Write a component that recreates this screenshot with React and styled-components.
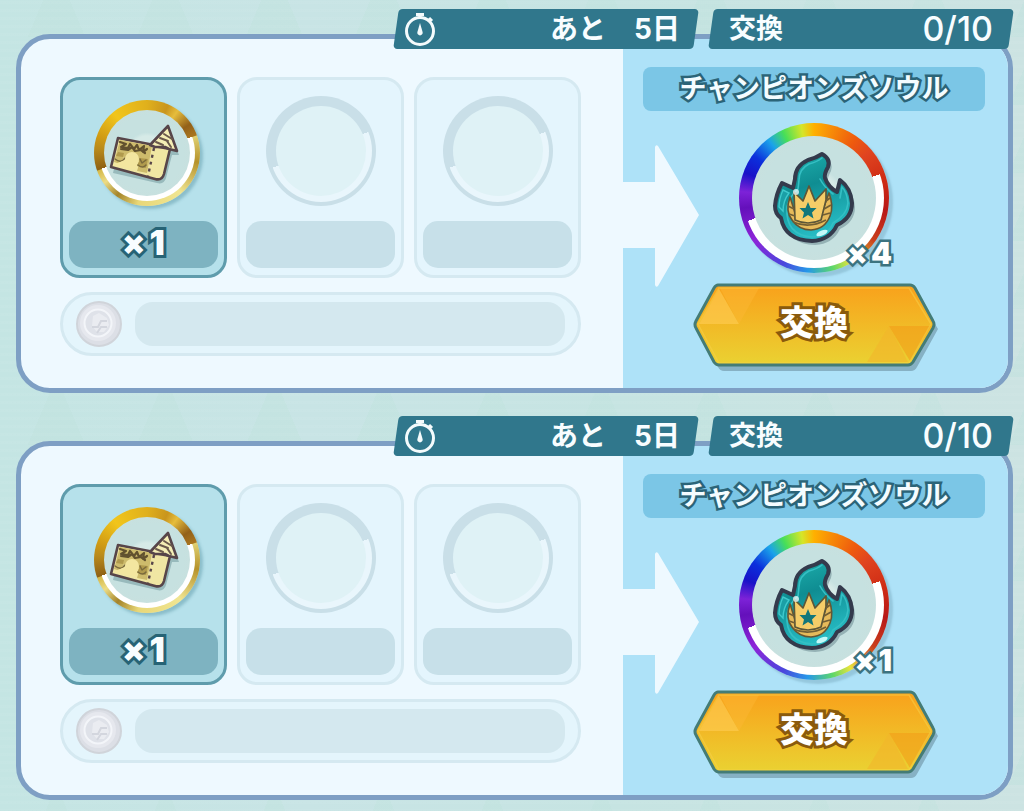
import React, { useId } from 'react'
import styled, { createGlobalStyle } from 'styled-components';

const offers = [
    { id: 1, name: 'チャンピオンズソウル', cost: 1, amount: 4, done: 0, limit: 10, days: 5 },
    { id: 2, name: 'チャンピオンズソウル', cost: 1, amount: 1, done: 0, limit: 10, days: 5 },
]

function Stopwatch() {
    return (
        <svg width="32" height="36" viewBox="0 0 32 36" fill="none" stroke="#f4fbfc" aria-hidden="true">
            <circle cx="16" cy="20" r="13.5" strokeWidth="3" />
            <path d="M12 3.5h8M16 3v5M25 7l3 3" strokeWidth="3" />
            <path d="M16 12l2.6 9a2.7 2.7 0 1 1-5.2 0z" fill="#f4fbfc" stroke="none" />
        </svg>
    )
}

function Ticket() {
    return (
        <svg width="76" height="64" viewBox="0 0 76 64" aria-hidden="true">
            <g strokeLinejoin="round" strokeLinecap="round" stroke="#574549">
                <path d="M9 18L40 24L59 6L68 30L61 30L55 53Q53 60 46 58L2 48Z" fill="#3c6c7455" stroke="none" transform="translate(2 4)" />
                <path d="M9 17L40 23L45 25L61 28L55 53Q53 60 46 58L2 46Z" fill="#f0e6a3" strokeWidth="2.6" />
                <path d="M43 25L11 19L5 41L11 43L15 36L31 40L28 50L38 52Z" fill="#cdbb6c" stroke="none" />
                <path d="M9 31l6 1l-1 4l-7-1zM31 37l8 1l-2 9l-9-2z" fill="#b09a4d" stroke="none" />
                <path d="M11 21l6 2l-5 3l7 1l2-4l4 5l3-4l2 5l5-4l-1 6l4-3M12 28l7 1l4-3l3 4l6-1l4 3" strokeWidth="2.2" fill="none" stroke="#61512f" />
                <path d="M6 38q6 5 10-1M29 44q5 4 8 0M31 38l2 4l4-3" strokeWidth="1.5" fill="none" stroke="#7a6a3c" />
                <path d="M4 44L28 49V40L18 38Z" fill="#f3e6a0" stroke="none" />
                <circle cx="23" cy="38" r="7" fill="#f3e6a0" stroke="none" />
                <path d="M41 24L59 5L68 30L60 28L56 26L46 26Z" fill="#f5eeb5" strokeWidth="2.6" />
                <path d="M51 17l8 3M55 13l8 5M58 20l4 6M47 21l7 3" strokeWidth="2" fill="none" stroke="#6b5a4c" />
                <path d="M45 27l-6 28" strokeWidth="2.4" strokeDasharray="3 4" strokeLinecap="butt" fill="none" />
            </g>
        </svg>
    )
}

function Flame() {
    const fill = useId()

    return (
        <svg width="86" height="98" viewBox="0 0 86 98" aria-hidden="true">
            <defs>
                <linearGradient id={fill} x1="0" y1="0" x2="0.3" y2="1">
                    <stop offset="0" stopColor="#1fb3b0" />
                    <stop offset="0.45" stopColor="#0f8d92" />
                    <stop offset="1" stopColor="#27bcc4" />
                </linearGradient>
            </defs>
            <path d="M51 5Q45 9 37 11Q24 17 24 30L22 39L11 34Q5 45 4 57Q4 65 10 69Q14 91 41 92Q59 91 66 76Q81 69 81 54Q80 39 69 31L66 43Q57 38 54 29Q53 25 57 18Q60 10 51 5Z" fill="#4b6b7566" transform="translate(3 4)" />
            <path d="M51 5Q45 9 37 11Q24 17 24 30L22 39L11 34Q5 45 4 57Q4 65 10 69Q14 91 41 92Q59 91 66 76Q81 69 81 54Q80 39 69 31L66 43Q57 38 54 29Q53 25 57 18Q60 10 51 5Z" fill={`url(#${fill})`} stroke="#343a4c" strokeWidth="4" strokeLinejoin="round" />
            <path d="M51 9Q46 13 38 15Q28 20 28 31L27 40Q18 48 16 58Q14 86 41 88Q57 87 62 74Q76 66 77 54Q76 43 71 38L69 49M49 30Q53 38 62 45" fill="none" stroke="#35bfc4" strokeWidth="1.6" strokeLinecap="round" />
            <path d="M12 41Q8 50 8 58L12 62Q12 52 18 44Z" fill="#1b9fa6" stroke="#3fc9cc" strokeWidth="1.4" />
            <path d="M19 48Q14 62 21 71Q28 81 40 81Q54 80 59 67Q63 57 58 44L50 66Q38 73 25 67Z" fill="#e6ba5a" stroke="#655633" strokeWidth="1.6" strokeLinejoin="round" />
            <path d="M24 71L23 43L32 52L38 37L44 52L55 40L55 51L50 71Q37 77 24 71Z" fill="#f5cd68" stroke="#5d5738" strokeWidth="1.7" strokeLinejoin="round" />
            <path d="M37 53l2.5 6h6l-4.500 4.500l1.500 6l-5.500-3.500l-5.500 3.500l1.500-6l-4.500-4.500h6z" fill="#12777b" />
            <path d="M17 57l6 3M18 65l6 2M22 73Q38 80 55 71M53 60l7-4M52 66l7-2M55 52l4-3" stroke="#725f34" strokeWidth="1.8" fill="none" />
            <circle cx="25" cy="43" r="3" fill="#f5ffff" opacity="0.75" />
            <ellipse cx="51" cy="84" rx="6" ry="2.5" fill="#d5ffff" opacity="0.9" transform="rotate(-24 51 84)" />
        </svg>
    )
}

function Coin() {
    return (
        <svg width="48" height="48" viewBox="0 0 48 48" aria-hidden="true">
            <circle cx="24" cy="24" r="22" fill="#dcdfe6" stroke="#d0d4da" strokeWidth="2" />
            <circle cx="23" cy="23" r="18" fill="#e6e8ee" />
            <circle cx="23" cy="23" r="13.5" fill="#dfe2e9" stroke="#f3f5f9" strokeWidth="2" />
            <path d="M18 16l6-3l8 5l2 7l-5 7h-7l-5-6z" fill="#eaecf1" />
            <path d="M17 27h6l3-6h6M22 33l4-6h6" fill="none" stroke="#d3d6de" strokeWidth="2" />
        </svg>
    )
}

function Exchange({ offer }) {
    const gold = 'gold' + offer.id

    return (
        <Offer>
            <Tags>
                <Tag>
                    <Stopwatch />
                    <span>あと　{offer.days}日</span>
                </Tag>
                <Tag $wide>
                    <span>交換</span>
                    <Tally>{offer.done}/{offer.limit}</Tally>
                </Tag>
            </Tags>
            <Panel>
                <Costs>
                    <Slots>
                        <Slot $active>
                            <GoldRing><Disc><Ticket /></Disc></GoldRing>
                            <Count $active><span>×</span><span>{offer.cost}</span></Count>
                        </Slot>
                        <Slot><EmptyRing><Disc $empty /></EmptyRing><Count /></Slot>
                        <Slot><EmptyRing><Disc $empty /></EmptyRing><Count /></Slot>
                    </Slots>
                    <CoinRow>
                        <Coin />
                        <CoinBar />
                    </CoinRow>
                </Costs>
                <Reward>
                    <Arrow viewBox="0 0 76 142" aria-hidden="true">
                        <path d="M0 37H32V2Q33 -1 35 1L76 70L35 141Q33 143 32 140V103H0Z" fill="#eef9ff" />
                    </Arrow>
                    <RewardBody>
                        <Title>{offer.name}</Title>
                        <RainbowRing>
                            <Disc><Flame /></Disc>
                            <Amount><span>×</span><span>{offer.amount}</span></Amount>
                        </RainbowRing>
                        <TradeButton type="button">
                            <ButtonShape viewBox="-4 0 250 90" preserveAspectRatio="none" aria-hidden="true">
                                <defs>
                                    <linearGradient id={gold} x1="0" y1="0" x2="0" y2="1">
                                        <stop offset="0" stopColor="#f9a11b" />
                                        <stop offset="1" stopColor="#ead232" />
                                    </linearGradient>
                                </defs>
                                <path d="M30 8H222L245 46L224 84Q222 88 218 88H31Q27 88 25 84L8 50Z" fill="#86b1c4" />
                                <path d="M25 2H217Q220 2 222 5L240 38Q242 41 240 45L220 79Q218 82 215 82H26Q23 82 21 79L3 45Q1 42 3 38L21 5Q23 2 25 2Z" fill={`url(#${gold})`} />
                                <path d="M6 41L26 6L46 41Z" fill="#ffcd55" opacity="0.6" />
                                <path d="M27 5H66L46 41Z" fill="#fdb935" opacity="0.45" />
                                <path d="M196 43H238L217 78Z" fill="#f39a18" opacity="0.55" />
                                <path d="M196 43L215 79H174Z" fill="#f1b62b" opacity="0.6" />
                                <path d="M26 5H216L238 41L216 80H26L5 41Z" fill="none" stroke="#f7d24a" strokeWidth="1.5" opacity="0.5" />
                                <path d="M25 2H217Q220 2 222 5L240 38Q242 41 240 45L220 79Q218 82 215 82H26Q23 82 21 79L3 45Q1 42 3 38L21 5Q23 2 25 2Z" fill="none" stroke="#447c76" strokeWidth="3" />
                            </ButtonShape>
                            <span>交換</span>
                        </TradeButton>
                    </RewardBody>
                </Reward>
            </Panel>
        </Offer>
    )
}

export default function App() {
    return (
        <>
            <GlobalStyle />
            <Page>
                {offers.map((val) => <Exchange key={val.id} offer={val} />)}
            </Page>
        </>
    )
}

const GlobalStyle = createGlobalStyle`
    * {
        box-sizing: border-box;
    }
    body {
        margin: 0;
        background: #c6e4e3;
        font-family: Inter, "Noto Sans CJK JP", sans-serif;
        font-weight: 700;
    }
`

const Page = styled.main`
    display: flex;
    flex-direction: column;
    gap: 23px;
    padding: 9px 11px 12px 16px;
    background:
        repeating-linear-gradient(0deg, #ffffff08 0 3px, transparent 3px 8px),
        conic-gradient(from 157deg at 50% 0, #bfe2dc66 46deg, transparent 0) 2px -31px / 109px 68px,
        linear-gradient(90deg, #c4e5e3, #c8e4e5 30%, #c6e4e2 60%, #cce3e2);
`

const Offer = styled.section`
    display: flex;
    flex-direction: column;
`

const Tags = styled.div`
    position: relative;
    z-index: 1;
    display: grid;
    grid-template-columns: 304px 304px;
    justify-content: end;
    gap: 11px;
    margin-bottom: -15px;
`

const Tag = styled.div`
    position: relative;
    display: flex;
    align-items: center;
    justify-content: space-between;
    height: 40px;
    padding: ${(props) => (props.$wide ? '0 20px' : '0 18px 0 10px')};
    color: #f8fdff;
    font-size: ${(props) => (props.$wide ? '27px' : '28px')};
    line-height: 40px;

    &::before {
        content: '';
        position: absolute;
        z-index: -1;
        inset: 0 2px;
        border-radius: 4px;
        background: #30778c;
        transform: skewX(-8deg);
    }
`

const Tally = styled.span`
    font-size: 34px;
    font-weight: 500;
    line-height: 36px;
`

const Panel = styled.div`
    display: grid;
    grid-template-columns: 602fr 385fr;
    border: 5px solid #7e9fc4;
    border-radius: 34px;
    overflow: hidden;
    background: #eef9ff;
`

const Costs = styled.div`
    display: flex;
    flex-direction: column;
    gap: 14px;
    padding: 38px 42px 32px 39px;
`

const Slots = styled.div`
    display: grid;
    grid-template-columns: repeat(3, 1fr);
    gap: 10px;
`

const Slot = styled.div`
    display: flex;
    flex-direction: column;
    align-items: center;
    justify-content: space-between;
    height: 201px;
    padding: ${(props) => (props.$active ? '20px 6px 7px' : '16px 6px 7px')};
    border: 3px solid ${(props) => (props.$active ? '#5f9cac' : '#d5e9f1')};
    border-radius: 20px;
    background: ${(props) => (props.$active ? '#b6e1eb' : '#e4f5fd')};
`

const Count = styled.div`
    display: flex;
    justify-content: center;
    gap: 4px;
    width: 100%;
    height: 47px;
    border-radius: 15px;
    background: ${(props) => (props.$active ? '#7eb3c1' : '#c7e0e9')};
    color: #f8fdff;
    font-size: 34px;
    font-weight: 900;
    line-height: 44px;
    -webkit-text-stroke: 6px #276375;
    paint-order: stroke fill;
`

const Disc = styled.div`
    position: relative;
    display: grid;
    place-items: center;
    border-radius: 50%;
    background: ${(props) => (props.$empty ? '#dff2f6' : 'radial-gradient(circle, #d6eae7 0 28%, #c6e1e0 34% 60%, #cbdfdc)')};
`

const Ring = styled.div`
    position: relative;
    flex: none;
    display: grid;
    border-radius: 50%;

    &::before {
        content: '';
        position: absolute;
        border-radius: 50%;
        background: conic-gradient(transparent 70deg, #fff 70deg 251deg, transparent 251deg);
    }
`

const GoldRing = styled(Ring)`
    width: 106px;
    height: 106px;
    margin-left: 6px;
    padding: 10px;
    background: conic-gradient(#e0b01c, #c9951d 24deg, #e6bd3c 36deg, #936119 56deg, #a9751f 70deg, #e0d072 71deg, #b6922a 100deg, #f0e592 140deg, #e8d778 190deg, #a4842a 215deg, #ecdc85 235deg, #d5b94a 250deg, #8f6114 251deg, #b98a1b 275deg, #d19c13 290deg, #f1c51c 320deg, #e0b01c);
    box-shadow: 3px 3px 3px #5b95a577;

    &::before {
        inset: 5px;
    }
`

const EmptyRing = styled(Ring)`
    width: 110px;
    height: 110px;
    padding: 10px;
    background: #c9dfe8;

    &::before {
        inset: 4px;
        background: conic-gradient(transparent 68deg, #e9f6fc 68deg 251deg, transparent 251deg);
    }
`

const CoinRow = styled.div`
    display: flex;
    align-items: center;
    gap: 12px;
    height: 64px;
    padding: 0 13px 0 12px;
    border: 3px solid #d5e9f1;
    border-radius: 32px;
    background: #e4f5fc;
`

const CoinBar = styled.div`
    flex: 1;
    height: 44px;
    border-radius: 18px;
    background: #d4e8ef;
`

const Reward = styled.div`
    display: grid;
    background: #aee2f8;
`

const Arrow = styled.svg`
    grid-area: 1 / 1;
    align-self: center;
    width: 76px;
    height: 142px;
    margin-top: 4px;
`

const RewardBody = styled.div`
    grid-area: 1 / 1;
    display: flex;
    flex-direction: column;
    align-items: center;
    padding: 28px 23px 0 20px;
`

const Title = styled.h2`
    align-self: stretch;
    margin: 0;
    border-radius: 8px;
    background: #7bc6e6;
    color: #f4fcff;
    font-size: 27px;
    line-height: 44px;
    text-align: center;
    -webkit-text-stroke: 5px #2b6478;
    paint-order: stroke fill;
`

const RainbowRing = styled(Ring)`
    width: 150px;
    height: 150px;
    margin-top: 12px;
    padding: 13px;
    background: conic-gradient(#ffb000, #f78a08 15deg, #ee5a0e 35deg, #e04420 50deg, #cf2c14 75deg, #b81818 100deg, #c93d1c 125deg, #e8e33c 150deg, #5ed76a 165deg, #2698e8 185deg, #4b46dc 205deg, #8d25d8 235deg, #6410bb 262deg, #7d22d8 275deg, #1812c8 290deg, #0b2fdc 305deg, #1aa3ea 322deg, #47df58 335deg, #d5e629 350deg, #ffb000);
    box-shadow: 4px 4px 2px #7fb0c488;

    &::before {
        inset: 5px;
    }
`

const Amount = styled.span`
    position: absolute;
    right: -3px;
    bottom: 0;
    display: flex;
    gap: 3px;
    color: #fff;
    font-size: 30px;
    font-weight: 900;
    line-height: 40px;
    -webkit-text-stroke: 5px #3c7380;
    paint-order: stroke fill;
`

const TradeButton = styled.button`
    display: grid;
    width: 250px;
    height: 90px;
    margin-top: 10px;
    padding: 0;
    border: 0;
    background: none;
    color: #fff;
    font: inherit;
    font-size: 34px;
    font-weight: 900;
    line-height: 80px;
    -webkit-text-stroke: 6px #8a5a0c;
    paint-order: stroke fill;
    cursor: pointer;

    > * {
        grid-area: 1 / 1;
    }
`

const ButtonShape = styled.svg`
    width: 100%;
    height: 100%;
`
